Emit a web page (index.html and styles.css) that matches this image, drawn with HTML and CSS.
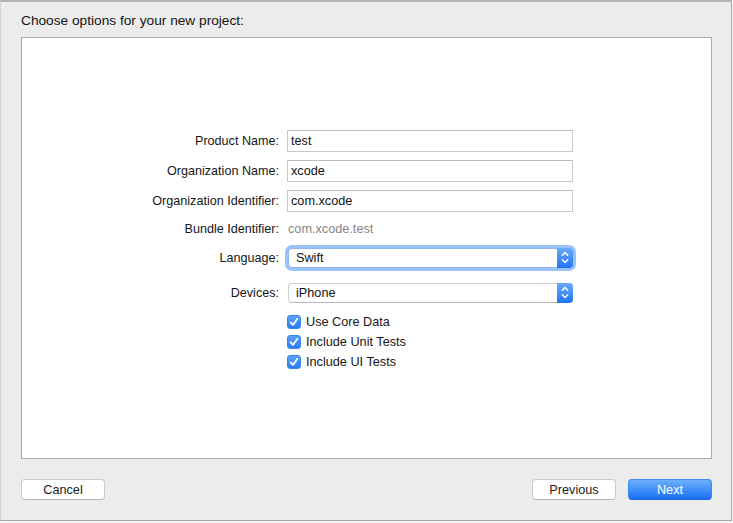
FILE: index.html
```html
<!DOCTYPE html>
<html>
<head>
<meta charset="utf-8">
<link rel="stylesheet" href="styles.css">
</head>
<body>
<div class="window">
  <div class="title">Choose options for your new project:</div>
  <div class="panel">
    <div class="form">
      <div class="label">Product Name:</div>
      <div class="cell"><div class="field">test</div></div>

      <div class="label">Organization Name:</div>
      <div class="cell"><div class="field">xcode</div></div>

      <div class="label">Organization Identifier:</div>
      <div class="cell"><div class="field">com.xcode</div></div>

      <div class="label">Bundle Identifier:</div>
      <div class="cell"><div class="static">com.xcode.test</div></div>

      <div class="label">Language:</div>
      <div class="cell">
        <div class="popup focused">
          <span class="popup-text">Swift</span>
          <span class="stepper">
            <svg width="16" height="19" viewBox="0 0 16 19"><path d="M5.3 7.2 L8 4.6 L10.7 7.2 M5.3 11.8 L8 14.4 L10.7 11.8" fill="none" stroke="#fff" stroke-width="1.4" stroke-linecap="round" stroke-linejoin="round"/></svg>
          </span>
        </div>
      </div>

      <div class="label">Devices:</div>
      <div class="cell">
        <div class="popup">
          <span class="popup-text">iPhone</span>
          <span class="stepper">
            <svg width="16" height="19" viewBox="0 0 16 19"><path d="M5.3 7.2 L8 4.6 L10.7 7.2 M5.3 11.8 L8 14.4 L10.7 11.8" fill="none" stroke="#fff" stroke-width="1.4" stroke-linecap="round" stroke-linejoin="round"/></svg>
          </span>
        </div>
      </div>

      <div class="label"></div>
      <div class="cell check-cell">
        <span class="checkbox"><svg width="14" height="14" viewBox="0 0 14 14"><path d="M3.6 7.4 L6 9.9 L10.4 3.8" fill="none" stroke="#fff" stroke-width="1.7" stroke-linecap="round" stroke-linejoin="round"/></svg></span>
        <span class="check-label">Use Core Data</span>
      </div>

      <div class="label"></div>
      <div class="cell check-cell">
        <span class="checkbox"><svg width="14" height="14" viewBox="0 0 14 14"><path d="M3.6 7.4 L6 9.9 L10.4 3.8" fill="none" stroke="#fff" stroke-width="1.7" stroke-linecap="round" stroke-linejoin="round"/></svg></span>
        <span class="check-label">Include Unit Tests</span>
      </div>

      <div class="label"></div>
      <div class="cell check-cell">
        <span class="checkbox"><svg width="14" height="14" viewBox="0 0 14 14"><path d="M3.6 7.4 L6 9.9 L10.4 3.8" fill="none" stroke="#fff" stroke-width="1.7" stroke-linecap="round" stroke-linejoin="round"/></svg></span>
        <span class="check-label">Include UI Tests</span>
      </div>
    </div>
  </div>
  <div class="footer">
    <button class="btn">Cancel</button>
    <div class="right-buttons">
      <button class="btn">Previous</button>
      <button class="btn primary">Next</button>
    </div>
  </div>
</div>
</body>
</html>
```

FILE: styles.css
```css
html, body {
  margin: 0;
  padding: 0;
  background: #f5f5f5;
}

body {
  font-family: "Liberation Sans", Arial, sans-serif;
  color: #1e1e1e;
  width: 733px;
  height: 523px;
  overflow: hidden;
}

.window {
  box-sizing: border-box;
  width: 732px;
  height: 521px;
  background: #ececec;
  border-top: 2px solid #b3b3b3;
  border-right: 1px solid #a8a8a8;
  border-bottom: 1px solid #a8a8a8;
  border-left: 1px solid #d4d4d4;
  padding-left: 20px;
}

.title {
  font-size: 13.7px;
  line-height: 16px;
  padding-top: 11px;
  margin-bottom: 8px;
  color: #141414;
}

.panel {
  box-sizing: border-box;
  width: 691px;
  height: 422px;
  background: #ffffff;
  border: 1px solid #a9a9a9;
  padding-top: 88px;
}

.form {
  display: grid;
  grid-template-columns: 257px 286px;
  grid-template-rows: 30px 30px 30px 26px 31px 39px 20px 20px 20px;
  column-gap: 8px;
  font-size: 12.6px;
}

.label {
  display: flex;
  align-items: center;
  justify-content: flex-end;
  color: #161616;
}

.cell {
  display: flex;
  align-items: center;
}

.field {
  box-sizing: border-box;
  width: 286px;
  height: 22px;
  border: 1px solid #c9c9c9;
  border-top-color: #bdbdbd;
  padding-left: 3px;
  display: flex;
  align-items: center;
  color: #111;
  font-size: 12.7px;
}

.static {
  padding-left: 1px;
  color: #858585;
  font-size: 12.7px;
}

.popup {
  box-sizing: border-box;
  margin-left: 1px;
  width: 285px;
  height: 20px;
  border-radius: 4px;
  background: #fff;
  border: 1px solid #cdcdcd;
  border-bottom-color: #b9b9b9;
  display: flex;
  align-items: center;
  justify-content: space-between;
  position: relative;
}

.popup.focused {
  box-shadow: 0 0 0 3px rgba(96, 158, 245, 0.62);
  border-color: #8fb7ee;
}

.popup-text {
  padding-left: 7px;
  color: #111;
  font-size: 12.7px;
}

.stepper {
  width: 16px;
  height: 20px;
  margin-right: -1px;
  margin-top: -1px;
  margin-bottom: -1px;
  border-radius: 0 4px 4px 0;
  background: linear-gradient(#6aacfb, #1f74f5);
  display: flex;
  align-items: center;
  justify-content: center;
}

.stepper svg {
  display: block;
}

.check-cell {
  gap: 5px;
}

.checkbox {
  box-sizing: border-box;
  width: 14px;
  height: 14px;
  border-radius: 3px;
  background: linear-gradient(#5aa3fb, #2b7df4);
  border: 1px solid #3a84ee;
  display: flex;
  align-items: center;
  justify-content: center;
}

.checkbox svg {
  display: block;
  margin: -1px;
}

.check-label {
  color: #161616;
  font-size: 12.7px;
}

.footer {
  width: 691px;
  margin-top: 20px;
  display: flex;
  justify-content: space-between;
}

.right-buttons {
  display: flex;
  gap: 12px;
}

.btn {
  box-sizing: border-box;
  width: 84px;
  height: 21px;
  margin: 0;
  padding: 0;
  border-radius: 4px;
  background: #ffffff;
  border: 1px solid #cbcbcb;
  border-bottom-color: #b5b5b5;
  font-family: "Liberation Sans", Arial, sans-serif;
  font-size: 12.7px;
  color: #1a1a1a;
}

.btn.primary {
  background: linear-gradient(#6bb0fb, #1a6ff5);
  border-color: #3f8af3;
  border-bottom-color: #1d63dc;
  color: #ffffff;
}
```
